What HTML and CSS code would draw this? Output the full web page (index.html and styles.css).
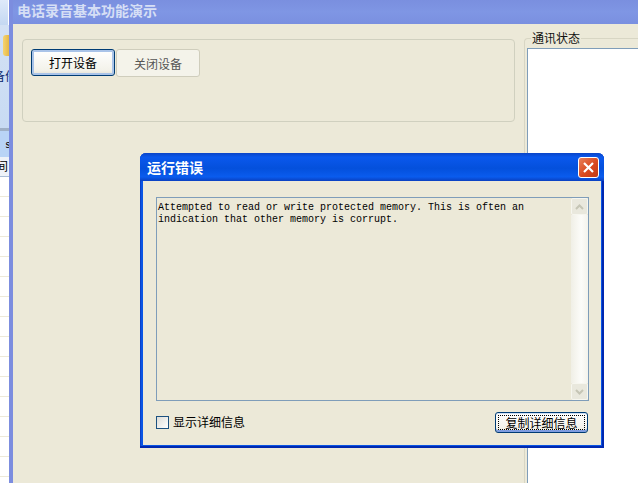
FILE: index.html
```html
<!DOCTYPE html>
<html lang="zh-Hans">
<head>
    <meta charset="UTF-8">
    <title>电话录音基本功能演示</title>
    <link rel="stylesheet" href="styles.css">
</head>
<body>
    <!-- window behind, only a strip is visible -->
    <div class="back-strip">
        <div class="strip-top"></div>
        <div class="strip-toolbar">
            <div class="strip-icon"></div>
            <div class="strip-label">备件</div>
        </div>
        <div class="strip-tab"><span>s</span></div>
        <div class="strip-head"><span>间</span></div>
        <div class="strip-rows"></div>
    </div>

    <div class="main-window">
        <div class="main-title">电话录音基本功能演示</div>
        <div class="main-body">
            <div class="device-group">
                <button class="xp-btn xp-btn-default">打开设备</button>
                <button class="xp-btn xp-btn-disabled">关闭设备</button>
            </div>
            <div class="status-group">
                <div class="status-legend">通讯状态</div>
                <div class="status-list"></div>
            </div>
        </div>
    </div>

    <div class="error-dialog">
        <div class="dialog-title">
            <span>运行错误</span>
            <div class="close-btn">
                <svg width="13" height="13" viewBox="0 0 13 13">
                    <path d="M2 2 L11 11 M11 2 L2 11" stroke="#fff" stroke-width="2.2" fill="none"/>
                </svg>
            </div>
        </div>
        <div class="dialog-body">
            <div class="message-box">
                <div class="message-text">Attempted to read or write protected memory. This is often an indication that other memory is corrupt.</div>
                <div class="scrollbar">
                    <div class="scroll-btn">
                        <svg width="9" height="6" viewBox="0 0 9 6"><path d="M1 5 L4.5 1.5 L8 5" stroke="#c5c5b5" stroke-width="2" fill="none"/></svg>
                    </div>
                    <div class="scroll-track"></div>
                    <div class="scroll-btn">
                        <svg width="9" height="6" viewBox="0 0 9 6"><path d="M1 1 L4.5 4.5 L8 1" stroke="#c5c5b5" stroke-width="2" fill="none"/></svg>
                    </div>
                </div>
            </div>
            <div class="dialog-footer">
                <label class="check-row">
                    <span class="check-box"></span>
                    <span>显示详细信息</span>
                </label>
                <button class="xp-btn copy-btn"><span class="focus-dots">复制详细信息</span></button>
            </div>
        </div>
    </div>
</body>
</html>
```

FILE: styles.css
```css
* {
    box-sizing: border-box;
}

html, body {
    margin: 0;
    height: 100%;
}

body {
    position: relative;
    width: 638px;
    height: 483px;
    overflow: hidden;
    background: #fff;
    font-family: "Noto Sans CJK SC", "Liberation Sans", sans-serif;
    font-size: 12px;
}

/* background window */
.back-strip {
    position: absolute;
    left: 0;
    top: 0;
    width: 9px;
    height: 483px;
    overflow: hidden;
    display: flex;
    flex-direction: column;
}

.strip-top {
    height: 25px;
    flex-shrink: 0;
    background: linear-gradient(#dfeafa, #c4d8f2);
    border-right: 1px solid #fff;
}

.strip-toolbar {
    height: 103px;
    flex-shrink: 0;
    background: linear-gradient(#d3e1f4, #c8dbf3);
    position: relative;
}

.strip-icon {
    position: absolute;
    left: 3px;
    top: 10px;
    width: 10px;
    height: 21px;
    background: linear-gradient(90deg, #f6d470, #d9a42a);
    border-radius: 3px;
}

.strip-label {
    position: absolute;
    left: -7px;
    top: 43px;
    width: 30px;
    color: #0a246a;
    line-height: 16px;
}

.strip-tab {
    height: 29px;
    flex-shrink: 0;
    border-top: 3px solid #9fb0c6;
    background: #b9d4f6;
    font-family: "Liberation Mono", monospace;
    font-size: 10px;
    padding: 10px 0 0 5px;
    line-height: 10px;
}

.strip-head {
    height: 20px;
    flex-shrink: 0;
    border-bottom: 1px solid #a9bdd6;
    background: #eef2f8;
    line-height: 18px;
    overflow: hidden;
}

.strip-head span {
    margin-left: -4px;
}

.strip-rows {
    flex: 1;
    background: repeating-linear-gradient(#fff 0 19px, #ece9d8 19px 20px);
}

/* main window */
.main-window {
    position: absolute;
    left: 9px;
    top: 0;
    width: 629px;
    height: 483px;
    display: flex;
    flex-direction: column;
    border-left: 4px solid #7c8ddf;
}

.main-title {
    height: 24px;
    flex-shrink: 0;
    padding-left: 4px;
    background: linear-gradient(#7a8fdf, #7f96e4 50%, #7a90e0);
    color: #d6dff5;
    font-size: 14px;
    font-weight: bold;
    line-height: 20px;
}

.main-body {
    flex: 1;
    min-height: 0;
    display: flex;
    align-items: flex-start;
    background: #ece9d8;
    padding: 0 0 0 9px;
}

.device-group {
    width: 493px;
    height: 83px;
    margin-top: 15px;
    border: 1px solid #d0d0bf;
    border-radius: 4px;
    padding: 9px 0 0 8px;
    display: flex;
    align-items: flex-start;
    gap: 1px;
}

.status-group {
    position: relative;
    margin-left: 9px;
    flex: 1;
    height: 445px;
    margin-top: 14px;
    border: 1px solid #d8d6c4;
    border-right: none;
    border-bottom: none;
    border-radius: 4px 0 0 0;
    padding: 9px 0 0 2px;
}

.status-legend {
    position: absolute;
    left: 6px;
    top: -8px;
    padding: 0 1px;
    background: #ece9d8;
    line-height: 14px;
    color: #111;
}

.status-list {
    height: 100%;
    background: #fff;
    border-top: 1px solid #7f9db9;
    border-left: 1px solid #7f9db9;
}

/* xp style buttons */
.xp-btn {
    font-family: inherit;
    font-size: 12px;
    border-radius: 3px;
    padding: 0;
    background: linear-gradient(#fff, #f3f2ea 80%, #e3e0d4);
    color: #000;
}

.xp-btn-default {
    width: 84px;
    height: 27px;
    border: 1px solid #003c74;
    box-shadow: inset 0 0 0 2px #a9c3e8;
}

.xp-btn-disabled {
    width: 84px;
    height: 28px;
    border: 1px solid #cfcdbc;
    background: #f4f3ea;
    color: #555;
}

/* error dialog on top */
.error-dialog {
    position: absolute;
    left: 140px;
    top: 153px;
    width: 464px;
    height: 295px;
    display: flex;
    flex-direction: column;
    border-radius: 6px 6px 0 0;
    background: #0a55e4;
    box-shadow: inset -2px -2px 0 #0028b0, inset 1px 0 0 #0a40c8;
    padding: 0 3px 3px 3px;
}

.dialog-title {
    height: 28px;
    flex-shrink: 0;
    margin: 0 -3px;
    padding: 0 5px 0 7px;
    display: flex;
    align-items: center;
    justify-content: space-between;
    border-radius: 6px 6px 0 0;
    background: linear-gradient(#0a45c8, #0a58ec 15%, #0450dc 55%, #0a5cee 85%, #0a40c0);
    color: #fff;
    font-size: 14px;
    font-weight: bold;
}

.close-btn {
    width: 21px;
    height: 21px;
    display: flex;
    align-items: center;
    justify-content: center;
    border: 1px solid #fff;
    border-radius: 3px;
    background: linear-gradient(135deg, #e8805a, #d9491f 55%, #c23a14);
}

.dialog-body {
    flex: 1;
    min-height: 0;
    display: flex;
    flex-direction: column;
    background: #ece9d8;
    padding: 16px 12px 0 13px;
}

.message-box {
    height: 204px;
    flex-shrink: 0;
    display: flex;
    justify-content: space-between;
    border: 1px solid #7f9db9;
}

.message-text {
    width: 372px;
    padding: 4px 0 0 1px;
    font-family: "Liberation Mono", monospace;
    font-size: 10px;
    line-height: 12px;
    color: #000;
}

.scrollbar {
    width: 17px;
    display: flex;
    flex-direction: column;
}

.scroll-btn {
    height: 17px;
    flex-shrink: 0;
    display: flex;
    align-items: center;
    justify-content: center;
    background: #e9e8dd;
    border: 1px solid #f6f6ef;
    border-radius: 2px;
}

.scroll-track {
    flex: 1;
    background: linear-gradient(90deg, #f0efe6, #fcfcf9 60%, #f4f3ec);
}

.dialog-footer {
    display: flex;
    align-items: flex-start;
    justify-content: space-between;
    margin-top: 11px;
    padding-right: 1px;
}

.check-row {
    display: flex;
    align-items: center;
    gap: 4px;
    margin-top: 2px;
    line-height: 16px;
    color: #000;
}

.check-box {
    width: 13px;
    height: 13px;
    border: 1px solid #1c5180;
    background: linear-gradient(135deg, #dcdcd7, #fff);
}

.copy-btn {
    width: 93px;
    height: 21px;
    border: 1px solid #003c74;
    box-shadow: inset 0 -2px 0 #7f9de0, inset 0 1px 0 #cfe0f5;
    padding: 2px;
}

.focus-dots {
    display: block;
    height: 100%;
    line-height: 14px;
    border: 1px dotted #000;
}
```
